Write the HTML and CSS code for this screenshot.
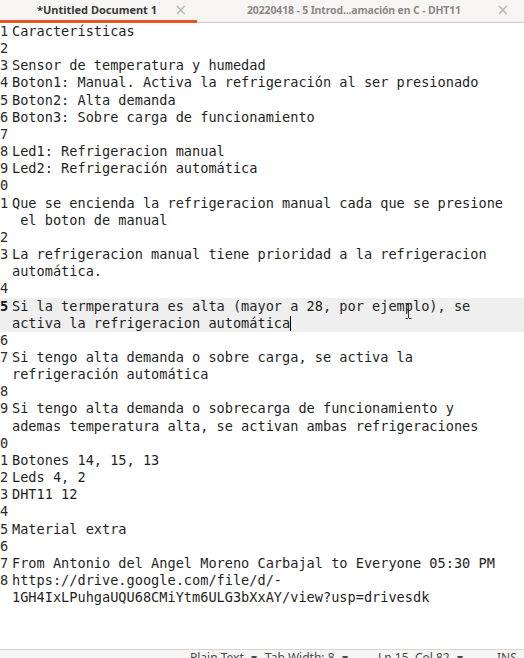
FILE: index.html
```html
<!DOCTYPE html>
<html lang="es">
<head>
<meta charset="utf-8">
<title>gedit</title>
<link rel="stylesheet" href="styles.css">
</head>
<body>
<div class="window">
  <div class="tabbar">
    <div class="tab tab-active">
      <span class="tab-label">*Untitled Document 1</span>
      <span class="tab-close">×</span>
    </div>
    <div class="tab tab-inactive">
      <span class="tab-label">20220418 - 5 Introd...amación en C - DHT11</span>
      <span class="tab-close">×</span>
    </div>
  </div>
  <div class="editor">
    <div class="line"><span class="ln">1</span><span class="txt">Características</span></div>
    <div class="line"><span class="ln">2</span><span class="txt"></span></div>
    <div class="line"><span class="ln">3</span><span class="txt">Sensor de temperatura y humedad</span></div>
    <div class="line"><span class="ln">4</span><span class="txt">Boton1: Manual. Activa la refrigeración al ser presionado</span></div>
    <div class="line"><span class="ln">5</span><span class="txt">Boton2: Alta demanda</span></div>
    <div class="line"><span class="ln">6</span><span class="txt">Boton3: Sobre carga de funcionamiento</span></div>
    <div class="line"><span class="ln">7</span><span class="txt"></span></div>
    <div class="line"><span class="ln">8</span><span class="txt">Led1: Refrigeracion manual</span></div>
    <div class="line"><span class="ln">9</span><span class="txt">Led2: Refrigeración automática</span></div>
    <div class="line"><span class="ln">10</span><span class="txt"></span></div>
    <div class="line"><span class="ln">11</span><span class="txt">Que se encienda la refrigeracion manual cada que se presione &nbsp;el boton de manual</span></div>
    <div class="line"><span class="ln">12</span><span class="txt"></span></div>
    <div class="line"><span class="ln">13</span><span class="txt">La refrigeracion manual tiene prioridad a la refrigeracion automática.</span></div>
    <div class="line"><span class="ln">14</span><span class="txt"></span></div>
    <div class="line current"><span class="ln">15</span><span class="txt">Si la termperatura es alta (mayor a 28, por ejemplo), se activa la refrigeracion automática<span class="caret"></span></span>
      <svg class="ibeam" width="7" height="16" viewBox="0 0 7 16"><path d="M0.5 0.5h2.5M4 0.5h2.5M3.5 1v14M0.5 15.5h2.5M4 15.5h2.5" stroke="#333" stroke-width="1" fill="none"/></svg>
    </div>
    <div class="line"><span class="ln">16</span><span class="txt"></span></div>
    <div class="line"><span class="ln">17</span><span class="txt">Si tengo alta demanda o sobre carga, se activa la refrigeración automática</span></div>
    <div class="line"><span class="ln">18</span><span class="txt"></span></div>
    <div class="line"><span class="ln">19</span><span class="txt">Si tengo alta demanda o sobrecarga de funcionamiento y ademas temperatura alta, se activan ambas refrigeraciones</span></div>
    <div class="line"><span class="ln">20</span><span class="txt"></span></div>
    <div class="line"><span class="ln">21</span><span class="txt">Botones 14, 15, 13</span></div>
    <div class="line"><span class="ln">22</span><span class="txt">Leds 4, 2</span></div>
    <div class="line"><span class="ln">23</span><span class="txt">DHT11 12</span></div>
    <div class="line"><span class="ln">24</span><span class="txt"></span></div>
    <div class="line"><span class="ln">25</span><span class="txt">Material extra</span></div>
    <div class="line"><span class="ln">26</span><span class="txt"></span></div>
    <div class="line"><span class="ln">27</span><span class="txt">From Antonio del Angel Moreno Carbajal to Everyone 05:30 PM</span></div>
    <div class="line"><span class="ln">28</span><span class="txt">https://drive.google.com/file/d/-<wbr>1GH4IxLPuhgaUQU68CMiYtm6ULG3bXxAY/view?usp=drivesdk</span></div>
  </div>
  <div class="statusbar">
    <span class="st st-lang">Plain Text <span class="arrow">▾</span></span>
    <span class="st st-tab">Tab Width: 8 <span class="arrow">▾</span></span>
    <span class="st st-pos">Ln 15, Col 82 <span class="arrow">▾</span></span>
    <span class="st st-ins">INS</span>
  </div>
</div>
</body>
</html>
```
FILE: styles.css
```css
* { box-sizing: border-box; }
html, body {
  margin: 0;
  padding: 0;
  background: #ffffff;
}
.window {
  width: 524px;
  height: 658px;
  display: flex;
  flex-direction: column;
  overflow: hidden;
  background: #ffffff;
}
.tabbar {
  display: flex;
  height: 23px;
  flex: 0 0 23px;
  background: #f6f5f4;
  font-family: "Noto Sans", "Open Sans", sans-serif;
  font-size: 11px;
  font-weight: bold;
}
.tab {
  display: flex;
  align-items: center;
  height: 23px;
  min-width: 0;
}
.tab-active {
  flex: 0 0 197px;
  border-bottom: 3px solid #e95420;
  color: #3a3a3a;
  padding-left: 37px;
  padding-right: 10px;
}
.tab-inactive {
  flex: 1 1 auto;
  border-bottom: 1px solid #cfcac5;
  color: #8a8a8a;
  padding-left: 50px;
  padding-right: 15px;
  padding-bottom: 2px;
}
.tab-inactive .tab-label {
  font-size: 10.5px;
  letter-spacing: -0.15px;
}
.tab-label {
  line-height: 16px;
  white-space: nowrap;
}
.tab-close {
  margin-left: auto;
  flex: 0 0 auto;
  font-weight: normal;
  color: #b5b5b5;
  font-size: 15px;
  font-family: "DejaVu Sans", sans-serif;
  line-height: 16px;
}

.editor {
  flex: 1;
  overflow: hidden;
  font-family: "DejaVu Sans Mono", monospace;
  font-size: 13.6px;
  line-height: 17.15px;
  color: #1f1f1f;
}
.line {
  display: grid;
  grid-template-columns: 1ch 60ch;
  column-gap: 3.8px;
  position: relative;
  min-height: 17.15px;
}
.line.current {
  background: #efefef;
}
.ln {
  display: flex;
  justify-content: flex-end;
  overflow: hidden;
  color: #2a2a2a;
  white-space: nowrap;
}
.current .ln {
  font-weight: bold;
  color: #111;
}
.txt {
  white-space: pre-wrap;
}
.caret {
  display: inline-block;
  width: 0;
  height: 15px;
  border-left: 1px solid #000;
  vertical-align: -3px;
}
.ibeam {
  position: absolute;
  left: 405px;
  top: 5px;
}
.statusbar {
  flex: 0 0 9px;
  height: 9px;
  border-top: 1px solid #d8d4d0;
  background: #f6f5f4;
  position: relative;
  font-family: "Noto Sans", "Open Sans", sans-serif;
  font-size: 12px;
  color: #4a4a4a;
}
.st {
  position: absolute;
  top: 1px;
  line-height: 14px;
  white-space: nowrap;
}
.arrow { margin-left: 4px; }
.st-lang { left: 190px; }
.st-tab { left: 265px; }
.st-pos { left: 378px; }
.st-ins { left: 497px; }
```
